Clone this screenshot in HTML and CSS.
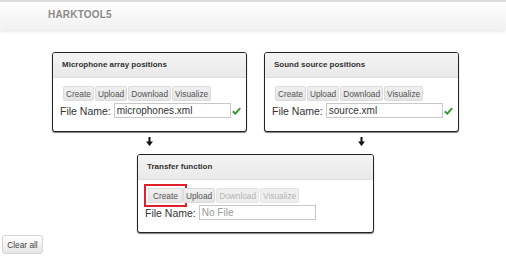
FILE: index.html
```html
<!DOCTYPE html>
<html lang="en">
<head>
    <meta charset="UTF-8">
    <title>HARKTOOL5</title>
    <link rel="stylesheet" href="styles.css">
</head>
<body>
    <nav class="navbar">
        <span class="brand">HARKTOOL5</span>
    </nav>

    <main class="flow">
        <div class="row">
            <div class="col">
                <section class="panel">
                    <div class="panel-head">Microphone array positions</div>
                    <div class="panel-body">
                        <div class="actions">
                            <button class="btn">Create</button>
                            <button class="btn">Upload</button>
                            <button class="btn">Download</button>
                            <button class="btn">Visualize</button>
                        </div>
                        <div class="file">
                            <label>File Name:</label>
                            <input type="text" value="microphones.xml">
                            <svg class="ok" width="9" height="8" viewBox="0 0 9 8"><path d="M0.8 4.2 L3.3 6.6 L8.2 1.2" fill="none" stroke="#2f9e2f" stroke-width="2"/></svg>
                        </div>
                    </div>
                </section>
                <svg class="arrow" width="7" height="9" viewBox="0 0 7 9"><path d="M2.5 0 H4.5 V4.5 H7 L3.5 9 L0 4.5 H2.5 Z" fill="#111"/></svg>
            </div>
            <div class="col">
                <section class="panel">
                    <div class="panel-head">Sound source positions</div>
                    <div class="panel-body">
                        <div class="actions">
                            <button class="btn">Create</button>
                            <button class="btn">Upload</button>
                            <button class="btn">Download</button>
                            <button class="btn">Visualize</button>
                        </div>
                        <div class="file">
                            <label>File Name:</label>
                            <input type="text" value="source.xml">
                            <svg class="ok" width="9" height="8" viewBox="0 0 9 8"><path d="M0.8 4.2 L3.3 6.6 L8.2 1.2" fill="none" stroke="#2f9e2f" stroke-width="2"/></svg>
                        </div>
                    </div>
                </section>
                <svg class="arrow" width="7" height="9" viewBox="0 0 7 9"><path d="M2.5 0 H4.5 V4.5 H7 L3.5 9 L0 4.5 H2.5 Z" fill="#111"/></svg>
            </div>
        </div>

        <section class="panel panel-wide">
            <div class="panel-head">Transfer function</div>
            <div class="panel-body">
                <div class="actions">
                    <button class="btn btn-marked">Create</button>
                    <button class="btn">Upload</button>
                    <button class="btn" disabled>Download</button>
                    <button class="btn" disabled>Visualize</button>
                </div>
                <div class="file">
                    <label>File Name:</label>
                    <input type="text" placeholder="No File">
                </div>
            </div>
        </section>
    </main>

    <button class="btn-clear">Clear all</button>
</body>
</html>
```

FILE: styles.css
```css
body {
    margin: 0;
    font-family: "Liberation Sans", Arial, sans-serif;
    background-color: #fff;
    color: #333;
}

.navbar {
    height: 28px;
    border-top: 2px solid #dcdcdc;
    background: linear-gradient(#ffffff, #f1f1f1);
    box-shadow: 0 1px 4px rgba(0, 0, 0, 0.12);
    padding-left: 48px;
    display: flex;
    align-items: center;
}

.brand {
    font-size: 10px;
    font-weight: bold;
    color: #8a8a8a;
    letter-spacing: 0.2px;
    margin-top: -3px;
}

.flow {
    width: 407px;
    margin: 22px 0 0 52px;
}

.row {
    display: flex;
    gap: 17px;
}

.col {
    display: flex;
    flex-direction: column;
    align-items: center;
}

.arrow {
    display: block;
    margin-top: 5px;
}

.panel {
    width: 195px;
    height: 80px;
    box-sizing: border-box;
    border: 1px solid #222;
    border-radius: 3px;
    box-shadow: 0 1px 1px rgba(0, 0, 0, 0.5);
    background-color: #fff;
    overflow: hidden;
}

.panel-wide {
    width: 237px;
    height: 79px;
    margin: 8px auto 0;
}

.panel-head {
    height: 24px;
    line-height: 24px;
    padding-left: 9px;
    font-size: 8px;
    font-weight: bold;
    color: #333;
    background: linear-gradient(#f4f4f4, #e9e9e9);
    border-bottom: 1px solid #dedede;
}

.panel-body {
    padding: 8px 8px 0 7px;
}

.actions {
    display: flex;
    gap: 1px;
    padding-left: 3px;
}

.btn {
    font-family: "Liberation Sans", Arial, sans-serif;
    font-size: 8.3px;
    color: #555;
    height: 15px;
    padding: 0 2px;
    background: linear-gradient(#f0f0f0, #e4e4e4);
    border: 1px solid #dcdcdc;
    border-radius: 2px;
}

.btn:disabled {
    color: #b4b4b4;
    background: #efefef;
    border-color: #e4e4e4;
}

/* red annotation box around the first button */
.btn-marked {
    padding: 0 4px;
    margin-right: -1px;
    border-radius: 0;
    outline: 2px solid #e0202a;
    outline-offset: 2px;
}

.file {
    display: flex;
    align-items: center;
    margin-top: 2px;
}

.file label {
    flex-shrink: 0;
    white-space: nowrap;
    font-size: 10.5px;
    color: #333;
    margin-right: 3px;
}

.file input {
    flex-shrink: 0;
    width: 117px;
    height: 15px;
    box-sizing: border-box;
    padding: 0 2px;
    border: 1px solid #c8c8c8;
    font-family: "Liberation Sans", Arial, sans-serif;
    font-size: 10px;
    color: #333;
}

.file input::placeholder {
    color: #999;
}

.ok {
    flex-shrink: 0;
    margin-left: 1px;
}

.btn-clear {
    display: block;
    margin: 2px 0 0 2px;
    width: 41px;
    height: 19px;
    padding: 0;
    font-family: "Liberation Sans", Arial, sans-serif;
    font-size: 8.3px;
    color: #444;
    background: linear-gradient(#ffffff, #e6e6e6);
    border: 1px solid #d4d4d4;
    border-radius: 3px;
}
```
